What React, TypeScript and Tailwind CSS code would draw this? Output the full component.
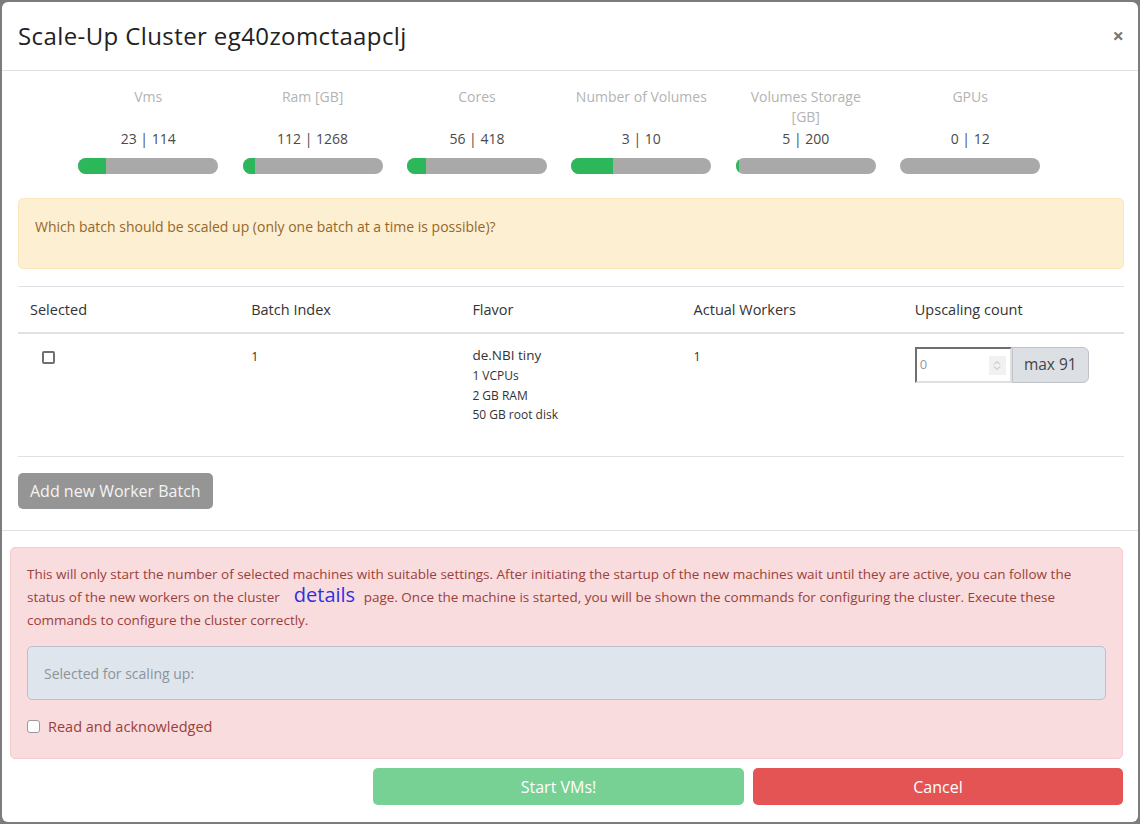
import React from 'react';

interface Stat {
  label: string;
  used: number;
  max: number;
}

const stats: Stat[] = [
  { label: 'Vms', used: 23, max: 114 },
  { label: 'Ram [GB]', used: 112, max: 1268 },
  { label: 'Cores', used: 56, max: 418 },
  { label: 'Number of Volumes', used: 3, max: 10 },
  { label: 'Volumes Storage [GB]', used: 5, max: 200 },
  { label: 'GPUs', used: 0, max: 12 },
];

const headers = ['Selected', 'Batch Index', 'Flavor', 'Actual Workers', 'Upscaling count'];

const StatBar = ({ stat }: { stat: Stat }) => {
  const pct = stat.max ? (stat.used / stat.max) * 100 : 0;
  return (
    <div className="w-[164.4px] flex flex-col items-center">
      <div className="h-[42px] w-[140px] text-center text-[14px] leading-5 text-[#b3b3b3]">{stat.label}</div>
      <div className="h-5 leading-5 text-[14px] text-[#4a4a4a]">
        {stat.used} | {stat.max}
      </div>
      <div className="mt-[9px] h-[16px] w-[140px] rounded-[8px] bg-[#a9a9a9] overflow-hidden">
        <div className="h-full bg-[#2cb85a]" style={{ width: `${pct}%` }} />
      </div>
    </div>
  );
};

export default function App() {
  return (
    <div className="min-h-[824px] bg-[#7c7c7c] p-[2px] font-['Open_Sans',sans-serif]">
      <div className="w-[1136px] h-[820px] bg-white rounded-[6px] flex flex-col overflow-hidden">
        {/* header */}
        <div className="h-[69px] shrink-0 flex items-center justify-between pl-4 pr-[14px] border-b border-[#dee2e6]">
          <h4 className="text-[24px] tracking-[0.4px] text-[#222] leading-none">Scale-Up Cluster eg40zomctaapclj</h4>
          <button className="text-[20px] font-bold text-[#777] leading-none">×</button>
        </div>

        {/* body */}
        <div className="pl-4 pr-[14px] pt-4 pb-[21px] border-b border-[#dee2e6]">
          <div className="flex pl-[48px]">
            {stats.map((s) => (
              <StatBar key={s.label} stat={s} />
            ))}
          </div>

          <div className="mt-[24px] h-[71px] rounded-[5px] border border-[#fbe6bd] bg-[#fdefd2] px-4 pt-[18px] text-[14px] leading-5 text-[#95672a]">
            Which batch should be scaled up (only one batch at a time is possible)?
          </div>

          <div className="mt-[17px] border-t border-[#dee2e6]">
            <div className="grid grid-cols-5 h-[47px] items-center border-b-2 border-[#dee2e6] text-[14.5px] text-[#333]">
              {headers.map((h) => (
                <div key={h} className="px-3">{h}</div>
              ))}
            </div>
            <div className="grid grid-cols-5 h-[123px] border-b border-[#dee2e6] text-[#333]">
              <div className="px-6 pt-[17px]">
                <div className="w-[13px] h-[13px] border-2 border-[#707070] rounded-[2px]" />
              </div>
              <div className="px-3 pt-[14px] text-[12.5px]">1</div>
              <div className="px-3 pt-[11px]">
                <div className="text-[13.5px] leading-5">de.NBI tiny</div>
                <div className="text-[12px] leading-[19.5px] mt-[1px]">1 VCPUs</div>
                <div className="text-[12px] leading-[19.5px]">2 GB RAM</div>
                <div className="text-[12px] leading-[19.5px]">50 GB root disk</div>
              </div>
              <div className="px-3 pt-[14px] text-[12.5px]">1</div>
              <div className="px-3 pt-[13px]">
                <div className="flex h-[36px]">
                  <div className="relative w-[97px] border-2 border-t-[#6f6f6f] border-l-[#6f6f6f] border-b-[#e0e0e0] border-r-[#e0e0e0] bg-white flex items-center pl-[3px] text-[13px] text-[#9a9a9a]">
                    0
                    <div className="absolute right-[4px] top-[7px] w-[17px] h-[19px] bg-[#f1f1f1] flex flex-col items-center justify-center gap-[1px]">
                      <svg width="8" height="5" viewBox="0 0 8 5"><path d="M1 4.5 4 1.5 7 4.5" fill="none" stroke="#b5b5b5" strokeWidth="1" /></svg>
                      <svg width="8" height="5" viewBox="0 0 8 5"><path d="M1 0.5 4 3.5 7 0.5" fill="none" stroke="#b5b5b5" strokeWidth="1" /></svg>
                    </div>
                  </div>
                  <div className="w-[77px] bg-[#dcdfe3] border border-[#bfc3c7] rounded-r-[6px] flex items-center justify-center text-[15.5px] text-[#444]">
                    max 91
                  </div>
                </div>
              </div>
            </div>
          </div>

          <button className="mt-4 h-[36px] px-3 rounded-[5px] bg-[#959595] text-[16px] text-[#f4f4f4]">
            Add new Worker Batch
          </button>
        </div>

        {/* footer */}
        <div className="pl-2 pr-[15px] pt-4">
          <div className="h-[212px] rounded-[5px] border border-[#f4cdd0] bg-[#f8dcde] pl-4 pr-4 pt-[15px] text-[13.5px] text-[#9c3f3a]">
            <p className="leading-[23px]">
              This will only start the number of selected machines with suitable settings. After initiating the startup of the new machines wait until they are active, you can follow the status of the new workers on the cluster
              <a className="text-[20px] text-[#3030e0] ml-[14px] mr-[5px] leading-[16px]">details</a> page. Once the machine is started, you will be shown the commands for configuring the cluster. Execute these commands to configure the cluster correctly.
            </p>
            <div className="mt-[14px] h-[54px] rounded-[5px] border border-[#b9c2cb] bg-[#dfe5ec] flex items-center pl-4 text-[14px] text-[#8b939b]">
              Selected for scaling up:
            </div>
            <label className="mt-[16px] flex items-center gap-[8px] text-[14.5px]">
              <span className="w-[13px] h-[13px] rounded-[3px] border border-[#9a9a9a] bg-white" />
              Read and acknowledged
            </label>
          </div>
          <div className="mt-[9px] flex justify-end gap-[9px]">
            <button className="w-[371px] h-[37px] rounded-[5px] bg-[#77d195] text-white text-[16px]">Start VMs!</button>
            <button className="w-[370px] h-[37px] rounded-[5px] bg-[#e45454] text-white text-[16px]">Cancel</button>
          </div>
        </div>
      </div>
    </div>
  );
}
